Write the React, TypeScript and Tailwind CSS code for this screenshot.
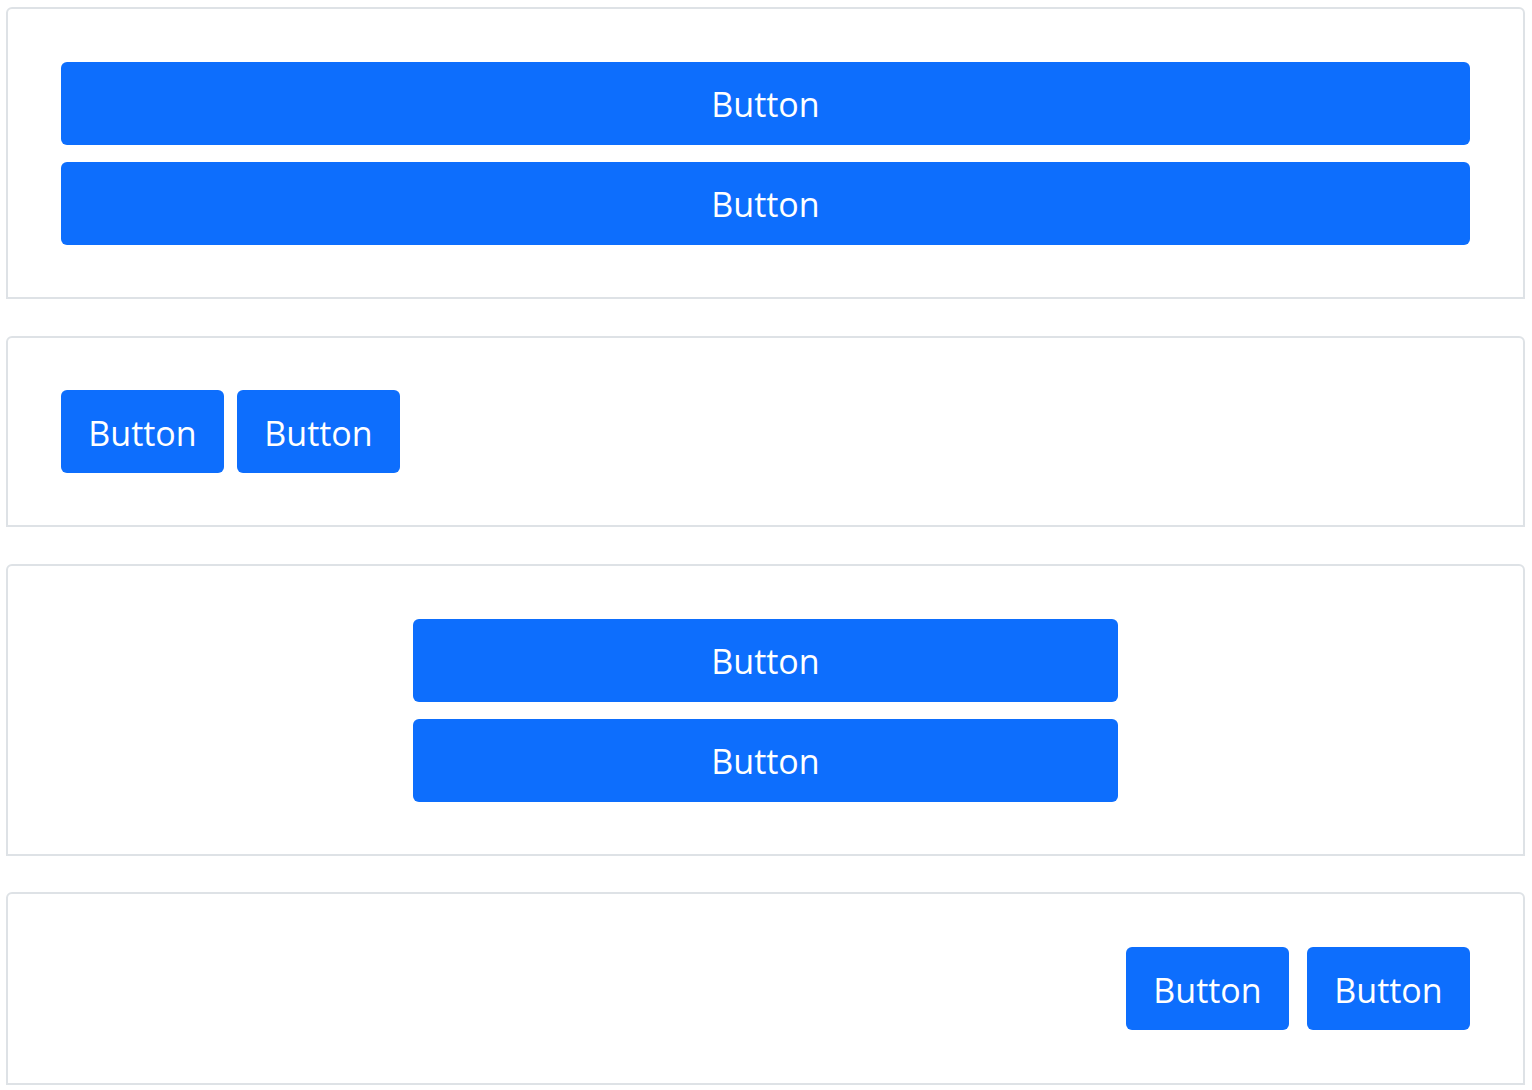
const Btn = ({ className = "" }: { className?: string }) => (
  <button
    type="button"
    className={`h-[83px] rounded-[6px] bg-[#0d6efd] pt-[2px] text-[34px] leading-none text-white ${className}`}
  >
    Button
  </button>
);

const Card = ({ children, className = "" }: { children: React.ReactNode; className?: string }) => (
  <div className={`flex flex-col justify-center rounded-t-[6px] border-2 border-[#dee2e6] bg-white px-[53px] ${className}`}>
    {children}
  </div>
);

const App: React.FC = () => {
  return (
    <div className="min-h-screen bg-white pl-[6px] pr-[7px] pt-[7px]" style={{ fontFamily: '"Open Sans", "Noto Sans", sans-serif' }}>
      <Card className="h-[292px]">
        <div className="flex flex-col gap-[17px]">
          <Btn className="w-full" />
          <Btn className="w-full" />
        </div>
      </Card>

      <Card className="mt-[37px] h-[191px]">
        <div className="flex gap-[13px]">
          <Btn className="w-[163px]" />
          <Btn className="w-[163px]" />
        </div>
      </Card>

      <Card className="mt-[37px] h-[292px]">
        <div className="mx-auto flex w-1/2 flex-col gap-[17px]">
          <Btn className="w-full" />
          <Btn className="w-full" />
        </div>
      </Card>

      <Card className="mt-[36px] h-[193px]">
        <div className="flex justify-end gap-[18px]">
          <Btn className="w-[163px]" />
          <Btn className="w-[163px]" />
        </div>
      </Card>
    </div>
  );
};

export default App;
